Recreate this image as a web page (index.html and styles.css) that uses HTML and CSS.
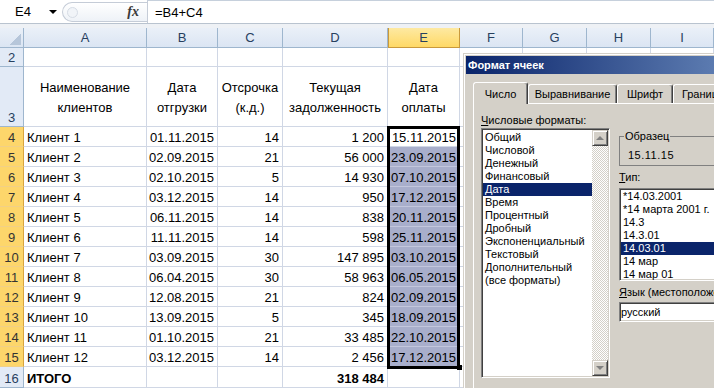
FILE: index.html
```html
<!DOCTYPE html>
<html lang="ru">
<head>
    <meta charset="UTF-8">
    <title>Формат ячеек</title>
    <link rel="stylesheet" href="styles.css">
</head>
<body>
    <div class="formula-bar">
        <div class="name-box"><span class="value">E4</span><span class="arrow"></span></div>
        <div class="fx-box"><span class="round"></span><span class="fx">fx</span></div>
        <div class="formula">=B4+C4</div>
    </div>
    <div class="bar-gap"></div>

    <div class="sheet">
        <!-- заголовки столбцов -->
        <div class="corner"><span></span></div>
        <div class="col-h">A</div>
        <div class="col-h">B</div>
        <div class="col-h">C</div>
        <div class="col-h">D</div>
        <div class="col-h sel">E</div>
        <div class="col-h">F</div>
        <div class="col-h">G</div>
        <div class="col-h">H</div>
        <div class="col-h">I</div>

        <div class="row-h">2</div>
        <div></div><div></div><div></div><div></div><div></div><div></div><div></div><div></div><div></div>

        <div class="row-h">3</div>
        <div class="th">Наименование<br>клиентов</div>
        <div class="th">Дата<br>отгрузки</div>
        <div class="th">Отсрочка<br>(к.д.)</div>
        <div class="th">Текущая<br>задолженность</div>
        <div class="th">Дата<br>оплаты</div>
        <div class="rest"></div>

        <div class="row-h sel">4</div>
        <div>Клиент 1</div><div class="num">01.11.2015</div><div class="num">14</div><div class="num">1 200</div><div class="num">15.11.2015</div><div class="rest"></div>
        <div class="row-h sel">5</div>
        <div>Клиент 2</div><div class="num">02.09.2015</div><div class="num">21</div><div class="num">56 000</div><div class="num pay">23.09.2015</div><div class="rest"></div>
        <div class="row-h sel">6</div>
        <div>Клиент 3</div><div class="num">02.10.2015</div><div class="num">5</div><div class="num">14 930</div><div class="num pay">07.10.2015</div><div class="rest"></div>
        <div class="row-h sel">7</div>
        <div>Клиент 4</div><div class="num">03.12.2015</div><div class="num">14</div><div class="num">950</div><div class="num pay">17.12.2015</div><div class="rest"></div>
        <div class="row-h sel">8</div>
        <div>Клиент 5</div><div class="num">06.11.2015</div><div class="num">14</div><div class="num">838</div><div class="num pay">20.11.2015</div><div class="rest"></div>
        <div class="row-h sel">9</div>
        <div>Клиент 6</div><div class="num">11.11.2015</div><div class="num">14</div><div class="num">598</div><div class="num pay">25.11.2015</div><div class="rest"></div>
        <div class="row-h sel">10</div>
        <div>Клиент 7</div><div class="num">03.09.2015</div><div class="num">30</div><div class="num">147 895</div><div class="num pay">03.10.2015</div><div class="rest"></div>
        <div class="row-h sel">11</div>
        <div>Клиент 8</div><div class="num">06.04.2015</div><div class="num">30</div><div class="num">58 963</div><div class="num pay">06.05.2015</div><div class="rest"></div>
        <div class="row-h sel">12</div>
        <div>Клиент 9</div><div class="num">12.08.2015</div><div class="num">21</div><div class="num">824</div><div class="num pay">02.09.2015</div><div class="rest"></div>
        <div class="row-h sel">13</div>
        <div>Клиент 10</div><div class="num">13.09.2015</div><div class="num">5</div><div class="num">345</div><div class="num pay">18.09.2015</div><div class="rest"></div>
        <div class="row-h sel">14</div>
        <div>Клиент 11</div><div class="num">01.10.2015</div><div class="num">21</div><div class="num">33 485</div><div class="num pay">22.10.2015</div><div class="rest"></div>
        <div class="row-h sel">15</div>
        <div>Клиент 12</div><div class="num">03.12.2015</div><div class="num">14</div><div class="num">2 456</div><div class="num pay">17.12.2015</div><div class="rest"></div>

        <div class="row-h">16</div>
        <div class="total">ИТОГО</div><div></div><div></div><div class="num total">318 484</div><div></div><div class="rest"></div>

        <!-- выделенный диапазон E4:E15 -->
        <div class="selection"><span class="fill-handle"></span></div>
    </div>

    <div class="dialog">
        <div class="dlg-title">Формат ячеек</div>
        <div class="dlg-body">
            <div class="tabs">
                <div class="tab tab-number active">Число</div>
                <div class="tab tab-align">Выравнивание</div>
                <div class="tab tab-font">Шрифт</div>
                <div class="tab tab-border">Граница</div>
            </div>
            <div class="tab-panel">
                <div class="col-left">
                    <div class="lbl"><u>Ч</u>исловые форматы:</div>
                    <div class="listbox formats">
                        <ul>
                            <li>Общий</li>
                            <li>Числовой</li>
                            <li>Денежный</li>
                            <li>Финансовый</li>
                            <li class="selected">Дата</li>
                            <li>Время</li>
                            <li>Процентный</li>
                            <li>Дробный</li>
                            <li>Экспоненциальный</li>
                            <li>Текстовый</li>
                            <li>Дополнительный</li>
                            <li>(все форматы)</li>
                        </ul>
                        <div class="scrollbar">
                            <div class="sb-btn up"></div>
                            <div class="sb-track"></div>
                            <div class="sb-btn down"></div>
                        </div>
                    </div>
                </div>
                <div class="col-right">
                    <fieldset class="sample">
                        <legend>Образец</legend>
                        <div class="sample-value">15.11.15</div>
                    </fieldset>
                    <div class="lbl lbl-type"><u>Т</u>ип:</div>
                    <div class="listbox types">
                        <ul>
                            <li>*14.03.2001</li>
                            <li>*14 марта 2001 г.</li>
                            <li>14.3</li>
                            <li>14.3.01</li>
                            <li class="selected">14.03.01</li>
                            <li>14 мар</li>
                            <li>14 мар 01</li>
                        </ul>
                    </div>
                    <div class="lbl lbl-lang"><u>Я</u>зык (местоположение):</div>
                    <div class="field">русский</div>
                </div>
            </div>
        </div>
    </div>
</body>
</html>
```
FILE: styles.css
```css
* {
    box-sizing: border-box;
    margin: 0;
    padding: 0;
}

html, body {
    overflow: hidden;
}

body {
    width: 714px;
    height: 388px;
    position: relative;
    font-family: "Liberation Sans", Arial, sans-serif;
    font-size: 13px;
    color: #000;
    background-color: #fff;
}

/* строка формул */
.formula-bar {
    display: flex;
    height: 24px;
    border-bottom: 1px solid #b9c3cf;
}

.name-box {
    width: 62px;
    display: flex;
    align-items: center;
    padding-left: 15px;
}

.name-box .value {
    width: 34px;
}

.name-box .arrow {
    width: 0;
    height: 0;
    border-left: 4px solid transparent;
    border-right: 4px solid transparent;
    border-top: 4px solid #000;
}

.fx-box {
    width: 85px;
    height: 20px;
    margin-top: 2px;
    display: flex;
    align-items: center;
    justify-content: space-between;
    padding: 0 8px 0 4px;
    border: 1px solid #c5ccd7;
    border-right: none;
    border-radius: 10px 0 0 10px;
    background: linear-gradient(#fff, #eef2f7);
}

.fx-box .round {
    width: 11px;
    height: 11px;
    border-radius: 50%;
    border: 1px solid #d6dce5;
    background-color: #f1f4f8;
}

.fx-box .fx {
    font-family: "Liberation Serif", serif;
    font-style: italic;
    font-weight: bold;
    font-size: 14px;
    color: #3a3a3a;
}

.formula {
    flex: 1;
    display: flex;
    align-items: center;
    padding-left: 7px;
    border-left: 1px solid #c5ccd7;
    border-top: 1px solid #c6d0dc;
}

.bar-gap {
    height: 4px;
    background-color: #eef1f5;
}

/* лист */
.sheet {
    position: relative;
    display: grid;
    grid-template-columns: 24px 123px 71px 65px 105px 72px 63px 64px 64px 63px;
    grid-template-rows: 20px 19px 60px repeat(12, 20px) 21px;
}

.sheet > div {
    display: flex;
    align-items: flex-end;
    padding: 0 3px 1px;
    line-height: 15px;
    white-space: nowrap;
    border-right: 1px solid #d0d7e5;
    border-bottom: 1px solid #d0d7e5;
}

.sheet > .corner {
    justify-content: flex-end;
    padding: 0 2px 2px 0;
    background: linear-gradient(#eaf0f8, #dbe5f3);
    border-color: #9eb6ce;
}

.corner span {
    width: 11px;
    height: 11px;
    background: linear-gradient(to bottom right, transparent 50%, #b6c6da 50%);
}

.sheet > .col-h {
    justify-content: center;
    align-items: center;
    padding: 0;
    color: #27405f;
    background: linear-gradient(#eaf0f8, #dbe5f3);
    border-color: #9eb6ce;
}

.sheet > .col-h.sel {
    background: linear-gradient(#fde9a2, #ffd966);
    border-color: #c9993c;
    box-shadow: inset 1px 0 0 #c9993c;
}

.sheet > .row-h {
    justify-content: center;
    padding: 0 0 1px;
    color: #27405f;
    background-color: #e2eaf6;
    border-color: #9eb6ce;
}

.sheet > .row-h.sel {
    color: #333;
    background-color: #fdd66b;
    border-right-color: #d8a43f;
    border-bottom-color: #f1d086;
}

.sheet > .th {
    justify-content: center;
    align-items: center;
    padding-top: 4px;
    text-align: center;
    line-height: 20px;
    white-space: normal;
}

.sheet > .num {
    justify-content: flex-end;
}

.sheet > .pay {
    background-color: #a8aecb;
    border-bottom-color: #c2c6dc;
}

.sheet > .rest {
    grid-column: span 4;
}

.sheet > .total {
    font-weight: bold;
}

.sheet > .selection {
    position: absolute;
    left: 387px;
    top: 98px;
    width: 73px;
    height: 243px;
    padding: 0;
    border: 3px solid #000;
}

.fill-handle {
    position: absolute;
    right: -5px;
    bottom: -4px;
    width: 5px;
    height: 5px;
    background-color: #000;
}

/* диалог "Формат ячеек" */
.dialog {
    position: absolute;
    left: 463px;
    top: 53px;
    width: 480px;
    height: 400px;
    padding: 2px;
    font-size: 11px;
    background-color: #d4d0c8;
    border: 1px solid #d4d0c8;
    box-shadow: inset 1px 1px 0 #fff;
}

.dlg-title {
    height: 18px;
    display: flex;
    align-items: center;
    padding-left: 2px;
    color: #fff;
    font-weight: bold;
    background: linear-gradient(to right, #0a246a, #a6caf0);
}

.dlg-body {
    padding: 8px 0 0 7px;
}

.tabs {
    position: relative;
    z-index: 1;
    display: flex;
    align-items: flex-end;
    height: 21px;
}

.tab {
    height: 19px;
    display: flex;
    align-items: center;
    justify-content: center;
    background-color: #d4d0c8;
    border: 1px solid;
    border-bottom: none;
    border-color: #fff #404040 transparent #fff;
    border-radius: 3px 3px 0 0;
    box-shadow: inset -1px 0 0 #808080;
}

.tab.active {
    height: 22px;
    margin-bottom: -1px;
}

.tab-number { width: 55px; }
.tab-align { width: 89px; }
.tab-font { width: 56px; }
.tab-border { width: 60px; }

.tab-panel {
    display: flex;
    gap: 9px;
    height: 400px;
    padding: 10px 0 0 7px;
    border-top: 1px solid #fff;
    border-left: 1px solid #fff;
}

.col-left {
    width: 129px;
    flex-shrink: 0;
}

.col-right {
    width: 170px;
    flex-shrink: 0;
}

.lbl {
    height: 12px;
    line-height: 12px;
    margin-bottom: 2px;
    white-space: nowrap;
}

.lbl-type {
    margin-top: 5px;
    margin-bottom: 5px;
}

.lbl-lang {
    margin-top: 5px;
    margin-bottom: 4px;
}

.listbox {
    padding: 1px;
    background-color: #fff;
    border: 1px solid;
    border-color: #808080 #fff #fff #808080;
    box-shadow: inset 1px 1px 0 #404040, inset -1px -1px 0 #d4d0c8;
}

.listbox ul {
    list-style: none;
}

.listbox li {
    height: 13px;
    line-height: 13px;
    padding-left: 2px;
    white-space: nowrap;
}

.listbox li.selected {
    color: #fff;
    background-color: #0a246a;
}

.formats {
    display: flex;
    height: 250px;
}

.formats ul {
    flex: 1;
    padding-top: 1px;
}

.scrollbar {
    width: 16px;
    display: flex;
    flex-direction: column;
}

.sb-btn {
    height: 16px;
    display: flex;
    align-items: center;
    justify-content: center;
    background-color: #d4d0c8;
    border: 1px solid;
    border-color: #d4d0c8 #404040 #404040 #d4d0c8;
    box-shadow: inset 1px 1px 0 #fff, inset -1px -1px 0 #808080;
}

.sb-btn::after {
    content: "";
    width: 0;
    height: 0;
    border-left: 4px solid transparent;
    border-right: 4px solid transparent;
}

.sb-btn.up::after {
    border-bottom: 4px solid #808080;
}

.sb-btn.down::after {
    border-top: 4px solid #808080;
}

.sb-track {
    flex: 1;
    background: repeating-conic-gradient(#fff 0 25%, #d4d0c8 0 50%) 0 0 / 2px 2px;
}

.sample {
    margin-top: 16px;
    padding: 7px 8px 4px;
    border: 1px solid #808080;
}

.sample legend {
    margin-left: -4px;
    padding: 0 1px;
    line-height: 12px;
}

.sample-value {
    line-height: 12px;
    letter-spacing: 0.5px;
}

.types {
    height: 93px;
}

.field {
    height: 20px;
    display: flex;
    align-items: center;
    padding-left: 1px;
    background-color: #fff;
    border: 1px solid;
    border-color: #808080 #fff #fff #808080;
    box-shadow: inset 1px 1px 0 #404040, inset -1px -1px 0 #d4d0c8;
}
```
